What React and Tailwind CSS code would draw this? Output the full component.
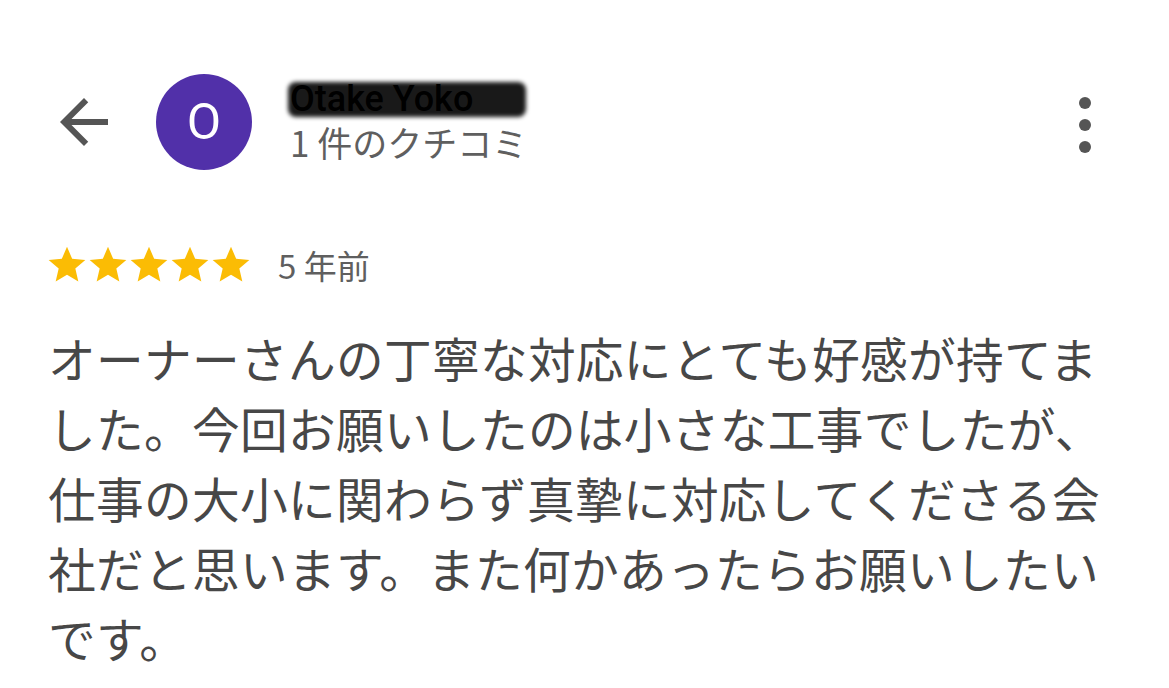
import React from "react";

const font = { fontFamily: '"Noto Sans CJK JP", "Noto Sans", Roboto, sans-serif' };
const latin = { fontFamily: 'Roboto, "Noto Sans CJK JP", sans-serif' };

function Star() {
  return (
    <svg viewBox="0 0 24 24" className="w-[44px] h-[44px] -mx-[1.5px]" fill="#fbbc04">
      <path d="M12 17.27L18.18 21l-1.64-7.03L22 9.24l-7.19-.61L12 2 9.19 8.63 2 9.24l5.46 4.73L5.82 21z" />
    </svg>
  );
}

export default function App() {
  const lines = [
    "オーナーさんの丁寧な対応にとても好感が持てま",
    "した。今回お願いしたのは小さな工事でしたが、",
    "仕事の大小に関わらず真摯に対応してくださる会",
    "社だと思います。また何かあったらお願いしたい",
    "です。",
  ];

  return (
    <div className="w-[1169px] h-[688px] bg-white overflow-hidden" style={font}>
      {/* header */}
      <div className="flex items-center pt-[74px] pl-[48px] pr-[60px]">
        <svg viewBox="0 0 24 24" className="w-[72px] h-[72px]" fill="#555555">
          <path d="M20 11H7.83l5.59-5.59L12 4l-8 8 8 8 1.41-1.41L7.83 13H20v-2z" />
        </svg>
        <div
          className="ml-[36px] w-[96px] h-[96px] rounded-full bg-[#5130a9] flex items-center justify-center text-white text-[50px] leading-none"
          style={latin}
        >
          O
        </div>
        <div className="ml-[38px] flex flex-col">
          <div className="relative w-[232px] h-[38px] flex items-center">
            <span className="text-[36px] font-medium text-black leading-none" style={latin}>Otake Yoko</span>
            <div className="absolute left-[-2px] right-[-4px] top-[2px] bottom-[1px] bg-black/90 rounded-[8px] blur-[2px]"></div>
          </div>
          <div className="text-[35px] text-[#5f5f5f] leading-[46px] mt-[1px]">1 件のクチコミ</div>
        </div>
        <div className="ml-auto flex flex-col items-center gap-[10px] pr-[18px] pt-[6px]">
          <div className="w-[12px] h-[12px] rounded-full bg-[#555555]"></div>
          <div className="w-[12px] h-[12px] rounded-full bg-[#555555]"></div>
          <div className="w-[12px] h-[12px] rounded-full bg-[#555555]"></div>
        </div>
      </div>

      {/* rating */}
      <div className="flex items-center pl-[46px] mt-[75px] h-[40px]">
        <div className="flex items-center">
          <Star />
          <Star />
          <Star />
          <Star />
          <Star />
        </div>
        <span className="ml-[27px] text-[33px] text-[#5f5f5f] leading-none">5 年前</span>
      </div>

      {/* body */}
      <div className="pl-[48px] mt-[38px] text-[47.7px] leading-[70px] tracking-[0.3px] text-[#474747]">
        {lines.map((l, i) => (
          <div key={i} className="whitespace-nowrap">{l}</div>
        ))}
      </div>
    </div>
  );
}
